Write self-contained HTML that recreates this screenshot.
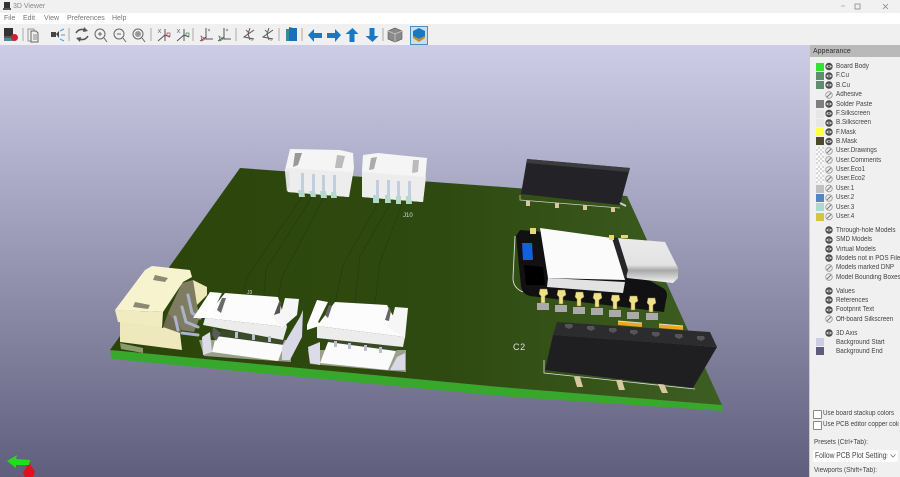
<!DOCTYPE html>
<html><head><meta charset="utf-8"><style>
html,body{margin:0;padding:0;width:900px;height:477px;overflow:hidden;background:#f0f0f0;font-family:"Liberation Sans",sans-serif}
#root{position:relative;width:900px;height:477px;overflow:hidden;filter:blur(.3px)}
.a{position:absolute}
.t{position:absolute;white-space:nowrap;color:#555;font-size:7px;line-height:9px}
.l{position:absolute;left:836px;white-space:nowrap;color:#444;font-size:7px;line-height:9px;transform:scaleX(.9);transform-origin:0 0}
.s{position:absolute;left:816px;width:8px;height:8px}
.c{background:repeating-conic-gradient(#d8d8d8 0 25%,#fbfbfb 0 50%) 0 0/4px 4px}
</style></head><body><div id="root">
<div class="a" style="left:0;top:0;width:900px;height:13px;background:#f1f1f1"></div>
<div class="a" style="left:0;top:13px;width:900px;height:11px;background:#fff"></div>
<div class="a" style="left:0;top:24px;width:900px;height:21px;background:#f0f0f0"></div>
<div class="t" style="left:13px;top:2px;color:#888">3D Viewer</div>
<div class="t" style="left:4px;top:14px;color:#777">File</div>
<div class="t" style="left:23px;top:14px;color:#777">Edit</div>
<div class="t" style="left:44px;top:14px;color:#777">View</div>
<div class="t" style="left:67px;top:14px;color:#777">Preferences</div>
<div class="t" style="left:112px;top:14px;color:#777">Help</div>

<svg class="a" style="left:0;top:0" width="900" height="477" viewBox="0 0 900 477">
<defs>
<linearGradient id="bg" x1="0" y1="45" x2="0" y2="477" gradientUnits="userSpaceOnUse"><stop offset="0" stop-color="#cdcde8"/><stop offset="1" stop-color="#5f5f7d"/></linearGradient>
<linearGradient id="pcb" x1="110" y1="0" x2="722" y2="0" gradientUnits="userSpaceOnUse"><stop offset="0" stop-color="#2b4409"/><stop offset=".55" stop-color="#2f4a10"/><stop offset="1" stop-color="#3d5e22"/></linearGradient>
<linearGradient id="usb" x1="0" y1="0" x2="0" y2="1"><stop offset="0" stop-color="#eaeaea"/><stop offset=".6" stop-color="#e2e2e2"/><stop offset=".72" stop-color="#a8a8a8"/><stop offset="1" stop-color="#f4f4f4"/></linearGradient>
<g id="eye"><circle cx="4" cy="4" r="3.700" fill="#4a4a4a"/><ellipse cx="4" cy="4" rx="2.700" ry="1.400" fill="#ccc"/><circle cx="4" cy="4" r=".9" fill="#444"/></g>
<g id="off"><circle cx="4" cy="4" r="3.300" fill="#eee" stroke="#999" stroke-width=".8"/><path d="M2 6L6 2" stroke="#777" stroke-width="1"/></g>
<g id="pin"><path d="M-3 0h7l1 5-3 2v7h-4V7l-2-2z" fill="#efe08a" stroke="#8a7a30" stroke-width=".5"/></g>
</defs>

<rect x="4" y="2" width="6" height="7" fill="#333"/><rect x="3" y="8" width="8" height="2" fill="#555"/>
<path d="M841 6h4" stroke="#aaa" stroke-width=".8"/><rect x="855" y="4" width="5" height="5" fill="none" stroke="#888" stroke-width=".8"/>
<path d="M883 4l5 5m0-5l-5 5" stroke="#888" stroke-width=".8"/>

<rect x="0" y="45" width="809" height="432" fill="url(#bg)"/>

<!-- toolbar -->
<g fill="none" stroke="#666" stroke-width="1">
<rect x="4" y="28" width="9" height="8" fill="#333" stroke="none"/><rect x="4" y="36" width="10" height="2" fill="#555" stroke="none"/><rect x="4" y="38" width="10" height="3" fill="#4a8a9a" stroke="none"/><circle cx="14.500" cy="37.500" r="3.500" fill="#d02030" stroke="none"/>
<path d="M23 28v13" stroke="#aaa"/><path d="M28 29h6v12h-6z" stroke="#999"/><path d="M31 31h5l2 2v9h-7z" fill="#f0f0f0"/><path d="M33 35h4M33 37h4M33 39h4" stroke-width=".7"/>
<rect x="51" y="32" width="5" height="5" fill="#444" stroke="none"/><path d="M56 34l3-3v7z" fill="#444" stroke="none"/>
<path d="M60 31l4-2M61 35h4M60 39l4 2" stroke="#4aa0d8"/>
<path d="M69 28v13" stroke="#aaa"/>
<path d="M76 33q3-5 9-3M88 36q-3 5-9 3" stroke="#555" stroke-width="1.500"/><path d="M84 27l4 4-5 1zM80 42l-4-4 5-1z" fill="#555" stroke="none"/>
<circle cx="100" cy="34" r="5"/><path d="M104 38l3 4M98 34h4M100 32v4"/>
<circle cx="119" cy="34" r="5"/><path d="M123 38l3 4M117 34h4"/>
<circle cx="138" cy="34" r="5"/><circle cx="138" cy="34" r="2.500" fill="#999" stroke="#999"/><path d="M142 38l3 4"/>
<path d="M151 28v13" stroke="#aaa"/>
<path d="M165 29v12M158 41l7-6 5 2" stroke="#555"/><path d="M158 29l3 4M161 29l-3 4" stroke-width=".6"/><path d="M167 33h3v3h-3z" stroke="#b04050" stroke-width=".7"/>
<path d="M184 29v12M177 41l7-6 5 2" stroke="#555"/><path d="M177 29l3 4M180 29l-3 4" stroke-width=".6"/><path d="M186 33h3v3h-3z" stroke="#408050" stroke-width=".7"/>
<path d="M193 28v13" stroke="#aaa"/>
<path d="M206 28v11h7M200 41l6-4" stroke="#555"/><path d="M201 36l4 3-3 2z" stroke="#b04050" stroke-width=".7"/><path d="M208 29l1 2 1-2" stroke-width=".6"/>
<path d="M224 28v11h7M218 41l6-4" stroke="#555"/><path d="M219 36l4 3-3 2z" stroke="#408050" stroke-width=".7"/><path d="M226 29l1 2 1-2" stroke-width=".6"/>
<path d="M236 28v13" stroke="#aaa"/>
<path d="M250 28l-2 6 2 6 M254 30l-10 7 10 2" stroke="#555"/><path d="M246 30l3 3" stroke="#b04050"/><path d="M252 38v3" stroke-width=".7"/>
<path d="M269 28l-2 6 2 6 M273 30l-10 7 10 2" stroke="#555"/><path d="M265 30l3 3" stroke="#408050"/><path d="M271 38v3" stroke-width=".7"/>
<path d="M279 28v13" stroke="#aaa"/>
</g>
<rect x="286" y="29" width="3" height="12" fill="#3a8a9a"/><path d="M289 27l4 1h4v13h-8z" fill="#1a70b8"/>
<path d="M302 28v13" stroke="#aaa"/>
<g fill="#1a78c2">
<path d="M308 35l6-6v4h8v5h-8v4z"/>
<path d="M341 35l-6-6v4h-8v5h8v4z"/>
<path d="M352.500 28l6 6h-4v8h-5v-8h-4z"/>
<path d="M372.500 42l6-6h-4v-8h-5v8h-4z"/>
</g>
<path d="M383 28v13" stroke="#aaa"/>
<path d="M395 28l7 3v8l-7 3-7-3v-8z" fill="#8a8a8a" stroke="#555" stroke-width=".6"/><path d="M388 31l7 3 7-3M395 34v8" stroke="#ccc" stroke-width=".8" fill="none"/>
<rect x="410.500" y="26.500" width="17" height="18" fill="#c6dff2" stroke="#4a8fc0"/>
<path d="M419 28l6 3v5l-6 3-6-3v-5z" fill="#1a78c2"/><path d="M413 36l6 3 6-3v2l-6 4-6-4z" fill="#d08a20"/>

<!-- axes -->
<path d="M28 461l2 2 1 3 4 5-2 6H25l-2-5 3-4z" fill="#e01020"/>
<path d="M7 461l10-6-1 4 14 1-1 5-13 0 0 3z" fill="#22dd18"/>

<!-- board -->
<path d="M110 350L500 387 722 405 723 411 500 396 112 359z" fill="#38a82c"/>
<path d="M110 350L240 168 627 196 722 405 500 387z" fill="url(#pcb)"/>
<g fill="none" stroke="#243a0c" stroke-width=".7" opacity=".8">
<path d="M302 197l-55 80-4 18M312 197l-46 72-2 26M324 197l-42 80-4 22M378 203l-35 62-8 38M390 204l-30 52-5 48M402 204l-22 58-5 42"/>
</g>

<!-- top connectors -->
<g>
<path d="M290 149l50 1 13 3 1 15-5 29-61-5-3-22z" fill="#f5f5f5"/>
<path d="M286 168l66 4-3 25-61-5z" fill="#ededed"/>
<path d="M295 153l7 0-4 12-5 2z" fill="#999"/><path d="M337 155l8 1-3 12-7 0z" fill="#bbb"/>
<path d="M285 172l4-1 1 15-3 6z" fill="#e0e0e0"/>
<g fill="#c4cce0"><rect x="301" y="173" width="3" height="17"/><rect x="312" y="174" width="3" height="17"/><rect x="322" y="175" width="3" height="16"/><rect x="333" y="175" width="3" height="17"/></g>
<g fill="#b4d8cc"><path d="M298 190h6l1 7h-6z"/><path d="M309 191h6l1 6h-5z"/><path d="M320 191h6l1 7h-6z"/><path d="M331 192h5l1 6h-6z"/></g>
<path d="M363 155l15-2 49 5-2 24-2 20-61-5v-27z" fill="#f5f5f5"/>
<path d="M362 172l64 5-3 25-61-5z" fill="#ededed"/>
<path d="M371 158l6-1-3 12-5 1z" fill="#aaa"/><path d="M413 160l6 0-1 12-6 1z" fill="#bbb"/>
<g fill="#c4cce0"><rect x="376" y="180" width="3" height="15"/><rect x="387" y="180" width="3" height="15"/><rect x="397" y="181" width="3" height="15"/><rect x="408" y="181" width="3" height="15"/></g>
<g fill="#b4d8cc"><path d="M373 195h6v8h-6z"/><path d="M385 195h5l1 8h-6z"/><path d="M396 196h5v8h-5z"/><path d="M406 196h5l1 8h-6z"/></g>
</g>
<text x="403" y="217" font-family="Liberation Sans" font-size="6" fill="#ddd">J10</text>

<!-- top-right header -->
<path d="M527 159l103 9-10 37-99-11z" fill="#232327"/>
<path d="M527 159l103 9-1 4-102-9z" fill="#3c3c3e"/>
<path d="M520 195v5l100 8" stroke="#ccc" stroke-width=".7" fill="none"/>
<g fill="#d8c8a0"><rect x="526" y="201" width="4" height="5"/><rect x="555" y="203" width="4" height="5"/><rect x="583" y="205" width="4" height="5"/><rect x="611" y="207" width="4" height="5"/></g>
<path d="M620 203l6 3" stroke="#ccc" stroke-width="2"/>

<!-- ESP module -->
<path d="M520 230l97 8 10 30 36 20q6 4 3 12l-2 12-134-16q-8-2-9-10l-5-50z" fill="#111114"/>
<path d="M515 236l-2 42q0 10 10 14" fill="none" stroke="#ddd" stroke-width=".9"/>
<path d="M617 238l48 4 13 26v10l-5 5-46-5-4-18z" fill="url(#usb)"/>
<path d="M612 238l6 0 10 32-3 12z" fill="#26262a"/>
<path d="M540 228l72 10 13 42-77-2z" fill="#fbfbfb"/>
<path d="M548 278l77 4-2 11-76-6z" fill="#e2e2e2"/>
<path d="M522 243h10l1 17h-10z" fill="#1060e0"/>
<path d="M524 265l19 2 2 18h-19z" fill="#000"/>
<use href="#pin" x="543" y="289"/><use href="#pin" x="561" y="290"/><use href="#pin" x="579" y="292"/><use href="#pin" x="597" y="293"/><use href="#pin" x="615" y="295"/><use href="#pin" x="633" y="296"/><use href="#pin" x="651" y="298"/>
<g fill="#aaaaaa"><rect x="537" y="303" width="12" height="7"/><rect x="555" y="305" width="12" height="7"/><rect x="573" y="307" width="12" height="7"/><rect x="591" y="308" width="12" height="7"/><rect x="609" y="310" width="12" height="7"/><rect x="627" y="312" width="12" height="7"/><rect x="646" y="313" width="12" height="7"/></g>
<rect x="530" y="228" width="6" height="6" fill="#e8d870"/><rect x="609" y="235" width="5" height="5" fill="#e8d870"/><rect x="621" y="235" width="7" height="3" fill="#e8d870"/>

<!-- orange SMD -->
<path d="M618 321l24 2v4l-24-2z" fill="#f0a818"/><path d="M659 324l24 2v4l-24-2z" fill="#f0a818"/>
<path d="M618 321l24 2M659 324l24 2" stroke="#ddd" stroke-width="1"/>

<!-- big header -->
<path d="M544 360v13l151 16" fill="none" stroke="#ddd" stroke-width=".8"/>
<g fill="#d8c8a0"><path d="M574 377h6l3 10h-6z"/><path d="M616 380h6l3 10h-6z"/><path d="M658 384h6l4 9h-6z"/></g>
<path d="M553 335l164 12-24 41-148-18z" fill="#1f1f22"/>
<path d="M557 322l153 10 7 15-164-12z" fill="#2c2c2e"/>
<g fill="#555"><path d="M565 324h7l1 3-4 2-4-2z"/><path d="M587 326h7l1 3-4 2-4-2z"/><path d="M609 328h7l1 3-4 2-4-2z"/><path d="M630 330h7l1 3-4 2-4-2z"/><path d="M652 332h7l1 3-4 2-4-2z"/><path d="M675 334h7l1 3-4 2-4-2z"/><path d="M697 336h7l1 3-4 2-4-2z"/></g>
<text x="513" y="350" font-family="Liberation Sans" font-size="9" fill="#e0e0e0" letter-spacing=".6">C2</text>

<!-- cream connector -->
<path d="M120 343l23 5 0 5-22-4z" fill="#8a9a6a"/>
<path d="M168 313l14-30 11-3 4 25 3 12-6 15-14-2z" fill="#7e7d62"/>
<path d="M193 280l14 7v8l-10 10z" fill="#efe8ba"/>
<path d="M120 322l43 6 4-5 13 10 2 17-62-8z" fill="#efe8bc"/>
<path d="M163 327l5-14 14 16-2 4z" fill="#6e6d54"/>
<path d="M115 310l48 2-1 16-44-6z" fill="#f1ebc2"/>
<path d="M145 270l7-4 38 4 2 7-9 5-20 30-48-2z" fill="#f8f3cf"/>
<path d="M155 275l13 3-3 4-12-2z" fill="#8a8a72"/><path d="M135 302l15 3-2 4-15-2z" fill="#8a8a72"/>
<g fill="none" stroke="#aab2cc" stroke-width="3" stroke-linecap="round"><path d="M188 295l4 18 8 5"/><path d="M182 307l4 15 12 5"/><path d="M175 317l3 13"/><path d="M182 333l16 2"/></g>

<!-- J3 -->
<g>
<path d="M199 340l90-0 2 22-87-6z" fill="#9aa08c"/>
<path d="M221 330l64 8-3 8-62-8z" fill="#3b4a28"/>
<path d="M216 336l68 9-6 16-66-9z" fill="#fbfbfb"/>
<path d="M225 293l53 4 9 30-82-9z" fill="#fcfcfc"/>
<path d="M205 318l82 9-4 13-80-15z" fill="#ececec"/>
<path d="M210 292l12 1-10 20 5 5-24 0z" fill="#fff"/>
<path d="M285 298l14 1-2 16-15 13-9-11 8-4z" fill="#f6f6f6"/>
<path d="M202 337l8-5 2 20-9 3z" fill="#dcdce8"/>
<path d="M282 347l18-30 3-7-1 27-12 23h-8z" fill="#d8d8e6"/>
<path d="M222 298l-5 12 4 3 5-15z" fill="#6a6a6a"/><path d="M279 302l-5 13 6-2 1-11z" fill="#555"/>
<path d="M213 327l-1 8 4 6 5-8z" fill="#5a5a5a"/>
<g fill="#b8c0cc"><rect x="235" y="332" width="3" height="6"/><rect x="252" y="334" width="3" height="6"/><rect x="268" y="336" width="3" height="6"/></g>
</g>
<!-- J4 -->
<g>
<path d="M308 350l98-0v22l-96-8z" fill="#9aa08c"/>
<path d="M328 335l70 9-2 8-68-9z" fill="#3b4a28"/>
<path d="M328 342l68 9-8 19-68-7z" fill="#fbfbfb"/>
<path d="M335 302l52 3 18 32-88-11z" fill="#fcfcfc"/>
<path d="M317 326l88 11-2 10-86-9z" fill="#ececec"/>
<path d="M317 300l11 2-10 20 4 3-15 5v-5z" fill="#fff"/>
<path d="M395 307l13 1-3 30-18-11 6-12z" fill="#f6f6f6"/>
<path d="M308 347l12-5v23l-10-2z" fill="#dcdce8"/>
<path d="M390 370l7-13 8-4v17z" fill="#d8d8e6"/>
<path d="M329 305l-4 10 3 3 4-12z" fill="#666"/><path d="M389 307l-4 13 4 1 2-10z" fill="#666"/>
<g fill="#b8c0cc"><rect x="334" y="341" width="3" height="6"/><rect x="348" y="343" width="3" height="6"/><rect x="364" y="345" width="3" height="6"/><rect x="379" y="347" width="3" height="6"/></g>
</g>
<text x="247" y="294" font-family="Liberation Sans" font-size="5" fill="#ddd">J3</text>

<!-- panel -->
<rect x="809" y="45" width="91" height="432" fill="#f0f0f0"/>
<rect x="810" y="45" width="90" height="12" fill="#b9b9b9"/>
<path d="M809.500 45v432" stroke="#ccc"/>
<g>
<use href="#eye" x="825" y="62.500"/><use href="#eye" x="825" y="72"/><use href="#eye" x="825" y="81"/><use href="#off" x="825" y="91"/><use href="#eye" x="825" y="100"/><use href="#eye" x="825" y="109.500"/><use href="#eye" x="825" y="119"/><use href="#eye" x="825" y="128"/><use href="#eye" x="825" y="137.500"/><use href="#off" x="825" y="147"/><use href="#off" x="825" y="156"/><use href="#off" x="825" y="166"/><use href="#off" x="825" y="175"/><use href="#off" x="825" y="184.500"/><use href="#off" x="825" y="194"/><use href="#off" x="825" y="203"/><use href="#off" x="825" y="212.500"/>
<use href="#eye" x="825" y="226"/><use href="#eye" x="825" y="236"/><use href="#eye" x="825" y="245"/><use href="#eye" x="825" y="254"/><use href="#off" x="825" y="264"/><use href="#off" x="825" y="273"/>
<use href="#eye" x="825" y="287"/><use href="#eye" x="825" y="296"/><use href="#eye" x="825" y="306"/><use href="#off" x="825" y="315"/><use href="#eye" x="825" y="329"/>
</g>
</svg>

<div class="t" style="left:813px;top:47px;color:#333;font-size:7px">Appearance</div>
<div class="s" style="top:63px;background:#2ee62e"></div>
<div class="s" style="top:72px;background:#5f8d6f"></div>
<div class="s" style="top:81px;background:#5f8d6f"></div>
<div class="s" style="top:100px;background:#7f7f7f"></div>
<div class="s" style="top:110px;background:#e6e6e6"></div>
<div class="s" style="top:119px;background:#e6e6e6"></div>
<div class="s" style="top:128px;background:#ffff44"></div>
<div class="s" style="top:137px;background:#4d4a2a"></div>
<div class="s c" style="top:147px"></div>
<div class="s c" style="top:156px"></div>
<div class="s c" style="top:166px"></div>
<div class="s c" style="top:175px"></div>
<div class="s" style="top:185px;background:#c0c0c0"></div>
<div class="s" style="top:194px;background:#4f86c8"></div>
<div class="s" style="top:203px;background:#b0d8d0"></div>
<div class="s" style="top:213px;background:#d4c440"></div>
<div class="s" style="top:338px;background:#cccce6"></div>
<div class="s" style="top:347px;background:#5c5c7c"></div>

<div class="l" style="top:62px">Board Body</div>
<div class="l" style="top:71px">F.Cu</div>
<div class="l" style="top:81px">B.Cu</div>
<div class="l" style="top:90px">Adhesive</div>
<div class="l" style="top:100px">Solder Paste</div>
<div class="l" style="top:109px">F.Silkscreen</div>
<div class="l" style="top:118px">B.Silkscreen</div>
<div class="l" style="top:128px">F.Mask</div>
<div class="l" style="top:137px">B.Mask</div>
<div class="l" style="top:146px">User.Drawings</div>
<div class="l" style="top:156px">User.Comments</div>
<div class="l" style="top:165px">User.Eco1</div>
<div class="l" style="top:174px">User.Eco2</div>
<div class="l" style="top:184px">User.1</div>
<div class="l" style="top:193px">User.2</div>
<div class="l" style="top:203px">User.3</div>
<div class="l" style="top:212px">User.4</div>
<div class="l" style="top:226px">Through-hole Models</div>
<div class="l" style="top:235px">SMD Models</div>
<div class="l" style="top:245px">Virtual Models</div>
<div class="l" style="top:254px">Models not in POS File</div>
<div class="l" style="top:263px">Models marked DNP</div>
<div class="l" style="top:273px">Model Bounding Boxes</div>
<div class="l" style="top:287px">Values</div>
<div class="l" style="top:296px">References</div>
<div class="l" style="top:305px">Footprint Text</div>
<div class="l" style="top:315px">Off-board Silkscreen</div>
<div class="l" style="top:329px">3D Axis</div>
<div class="l" style="top:338px">Background Start</div>
<div class="l" style="top:347px">Background End</div>

<div class="a" style="left:813px;top:410px;width:7px;height:7px;border:1px solid #888;background:#fff;border-radius:1px"></div>
<div class="l" style="left:823px;top:409px">Use board stackup colors</div>
<div class="a" style="left:813px;top:421px;width:7px;height:7px;border:1px solid #888;background:#fff;border-radius:1px"></div>
<div class="l" style="left:823px;top:420px;width:84px;overflow:hidden">Use PCB editor copper colors</div>
<div class="l" style="left:814px;top:438px;transform:scaleX(.92)">Presets (Ctrl+Tab):</div>
<div class="a" style="left:813px;top:450px;width:85px;height:12px;background:#fff;border-radius:2px"></div>
<div class="l" style="left:815px;top:451px;font-size:8px;transform:scaleX(.84);width:86px;overflow:hidden">Follow PCB Plot Settings</div>
<svg class="a" style="left:890px;top:454px" width="6" height="4"><path d="M.5 .5l2.500 2.500 2.500-2.500" fill="none" stroke="#777" stroke-width=".8"/></svg>
<div class="l" style="left:814px;top:466px;transform:scaleX(.92)">Viewports (Shift+Tab):</div>
</div></body></html>
